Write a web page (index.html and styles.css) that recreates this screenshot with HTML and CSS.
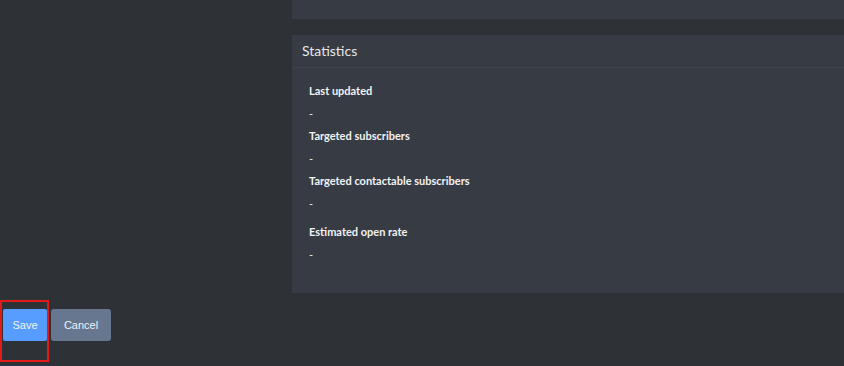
FILE: index.html
```html
<!DOCTYPE html>
<html>
<head>
<meta charset="utf-8">
<link rel="stylesheet" href="styles.css">
</head>
<body>
<div class="page">
  <div class="layout">
    <div class="sidebar"></div>
    <div class="main">
      <div class="card card-top"></div>
      <div class="card stats">
        <div class="card-header">Statistics</div>
        <div class="card-body">
          <div class="field">
            <div class="label">Last updated</div>
            <div class="value">-</div>
          </div>
          <div class="field">
            <div class="label">Targeted subscribers</div>
            <div class="value">-</div>
          </div>
          <div class="field">
            <div class="label">Targeted contactable subscribers</div>
            <div class="value">-</div>
          </div>
          <div class="field field-last">
            <div class="label">Estimated open rate</div>
            <div class="value">-</div>
          </div>
        </div>
      </div>
    </div>
  </div>
  <div class="actions">
    <div class="highlight">
      <button class="btn btn-primary">Save</button>
    </div>
    <button class="btn btn-secondary">Cancel</button>
  </div>
</div>
</body>
</html>
```

FILE: styles.css
```css
html, body {
  margin: 0;
  padding: 0;
  height: 100%;
  background: #2e3237;
  overflow: hidden;
}
.page {
  width: 844px;
  height: 366px;
  display: flex;
  flex-direction: column;
  font-family: "Lato", "DejaVu Sans", sans-serif;
  color: #f1f2f4;
}
.layout {
  display: flex;
}
.sidebar {
  width: 292px;
  flex: none;
}
.main {
  width: 560px;
  flex: none;
  display: flex;
  flex-direction: column;
  gap: 16px;
}
.card {
  background: #373b43;
}
.card-top {
  height: 19px;
}
.stats {
  height: 258px;
}
.card-header {
  height: 33px;
  box-sizing: border-box;
  border-bottom: 1px solid #3f444b;
  padding: 8px 10px 0;
  font-size: 14px;
  line-height: 16px;
  color: #e6e8eb;
}
.card-body {
  padding: 16px 17px 0;
}
.field {
  font-size: 11px;
  line-height: 13px;
}
.label {
  font-weight: 700;
}
.value {
  margin-top: 10px;
  height: 13px;
  margin-bottom: 9px;
}
.field:nth-child(3) .value {
  margin-bottom: 15px;
}
.actions {
  display: flex;
  align-items: flex-start;
  gap: 2px;
  margin-top: 7px;
}
.highlight {
  box-sizing: border-box;
  width: 49px;
  height: 62px;
  border: 2px solid #e11a1a;
  padding: 7px 0 0 1px;
}
.btn {
  font-family: "Liberation Sans", Arial, sans-serif;
  font-size: 11px;
  color: #eef2f7;
  border: none;
  border-radius: 3px;
  height: 32px;
  padding: 0;
  margin-top: 9px;
}
.highlight .btn {
  margin-top: 0;
}
.btn-primary {
  background: #579dff;
  width: 44px;
  border-radius: 2px;
}
.btn-secondary {
  background: #687790;
  width: 60px;
}
```
